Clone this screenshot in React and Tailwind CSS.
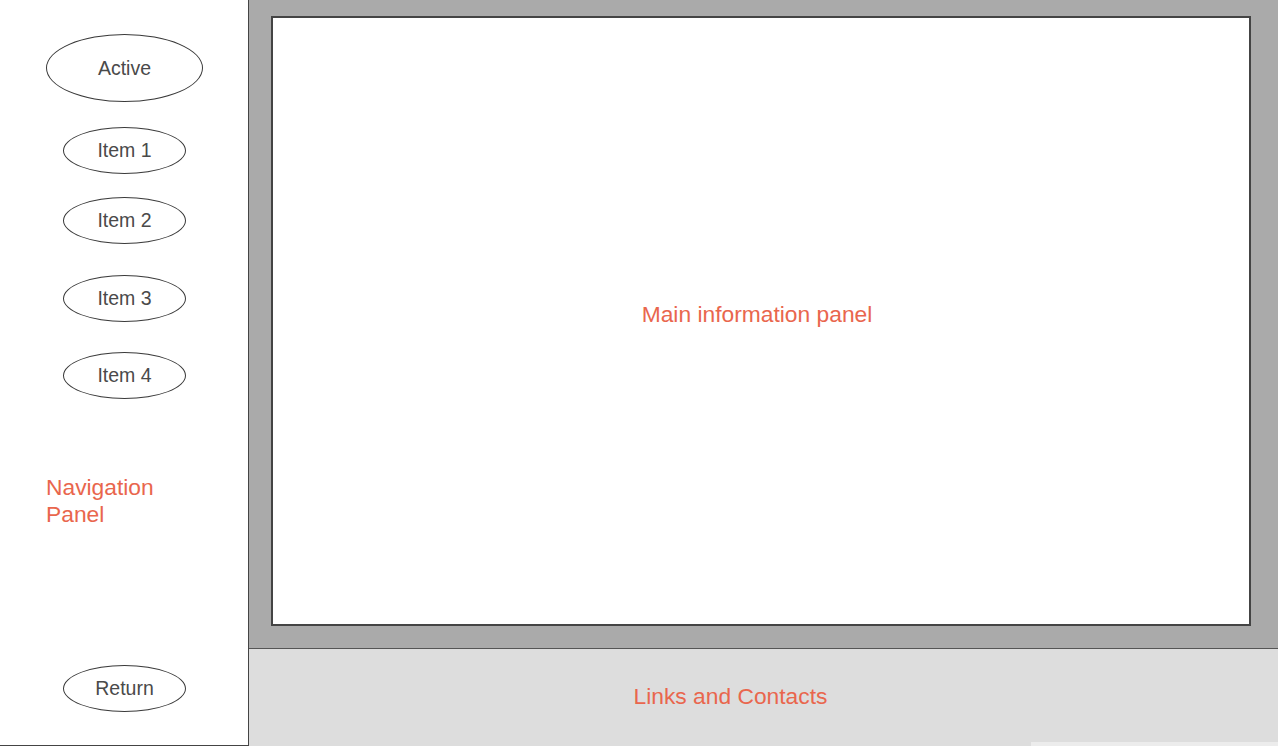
const font = { fontFamily: '"Liberation Sans", Arial, sans-serif' };

function Pill({ label, big, className = "" }) {
  const size = big ? "w-[157px] h-[68px] pt-[2px]" : "w-[123px] h-[47px]";
  return (
    <div
      className={`${size} ${className} rounded-[50%] border border-[#3a3a3a] bg-white flex items-center justify-center text-[19.5px] text-[#4a4a4a]`}
    >
      {label}
    </div>
  );
}

export default function App() {
  return (
    <div className="flex w-[1278px] h-[746px] overflow-hidden bg-white" style={font}>
      <nav className="w-[249px] h-[746px] shrink-0 border-r border-b border-[#444444] flex flex-col">
        <Pill big label="Active" className="mt-[34px] ml-[46px]" />
        <Pill label="Item 1" className="mt-[25px] ml-[63px]" />
        <Pill label="Item 2" className="mt-[23px] ml-[63px]" />
        <Pill label="Item 3" className="mt-[31px] ml-[63px]" />
        <Pill label="Item 4" className="mt-[30px] ml-[63px]" />
        <div className="mt-[75px] ml-[46px] text-[22.8px] leading-[27px] text-[#e9664d]">
          Navigation
          <br />
          Panel
        </div>
        <Pill label="Return" className="mt-auto mb-[33px] ml-[63px]" />
      </nav>

      <div className="flex-1 flex flex-col">
        <main className="h-[649px] bg-[#aaaaaa] border-b border-[#555555] pt-[16px] pl-[22px] pr-[27px] pb-[22px]">
          <div className="h-full border-2 border-[#444444] bg-white flex items-center justify-center pb-[14px] pr-[8px]">
            <span className="text-[22.8px] text-[#e9664d]">Main information panel</span>
          </div>
        </main>
        <footer className="flex-1 bg-[#dddddd] flex flex-col">
          <div className="flex-1 flex items-center justify-center pr-[66px] pt-[2px]">
            <span className="text-[22.8px] text-[#e9664d]">Links and Contacts</span>
          </div>
          <div className="h-[4px] flex justify-end">
            <div className="w-[247px] bg-[#ececec]" />
          </div>
        </footer>
      </div>
    </div>
  );
}
